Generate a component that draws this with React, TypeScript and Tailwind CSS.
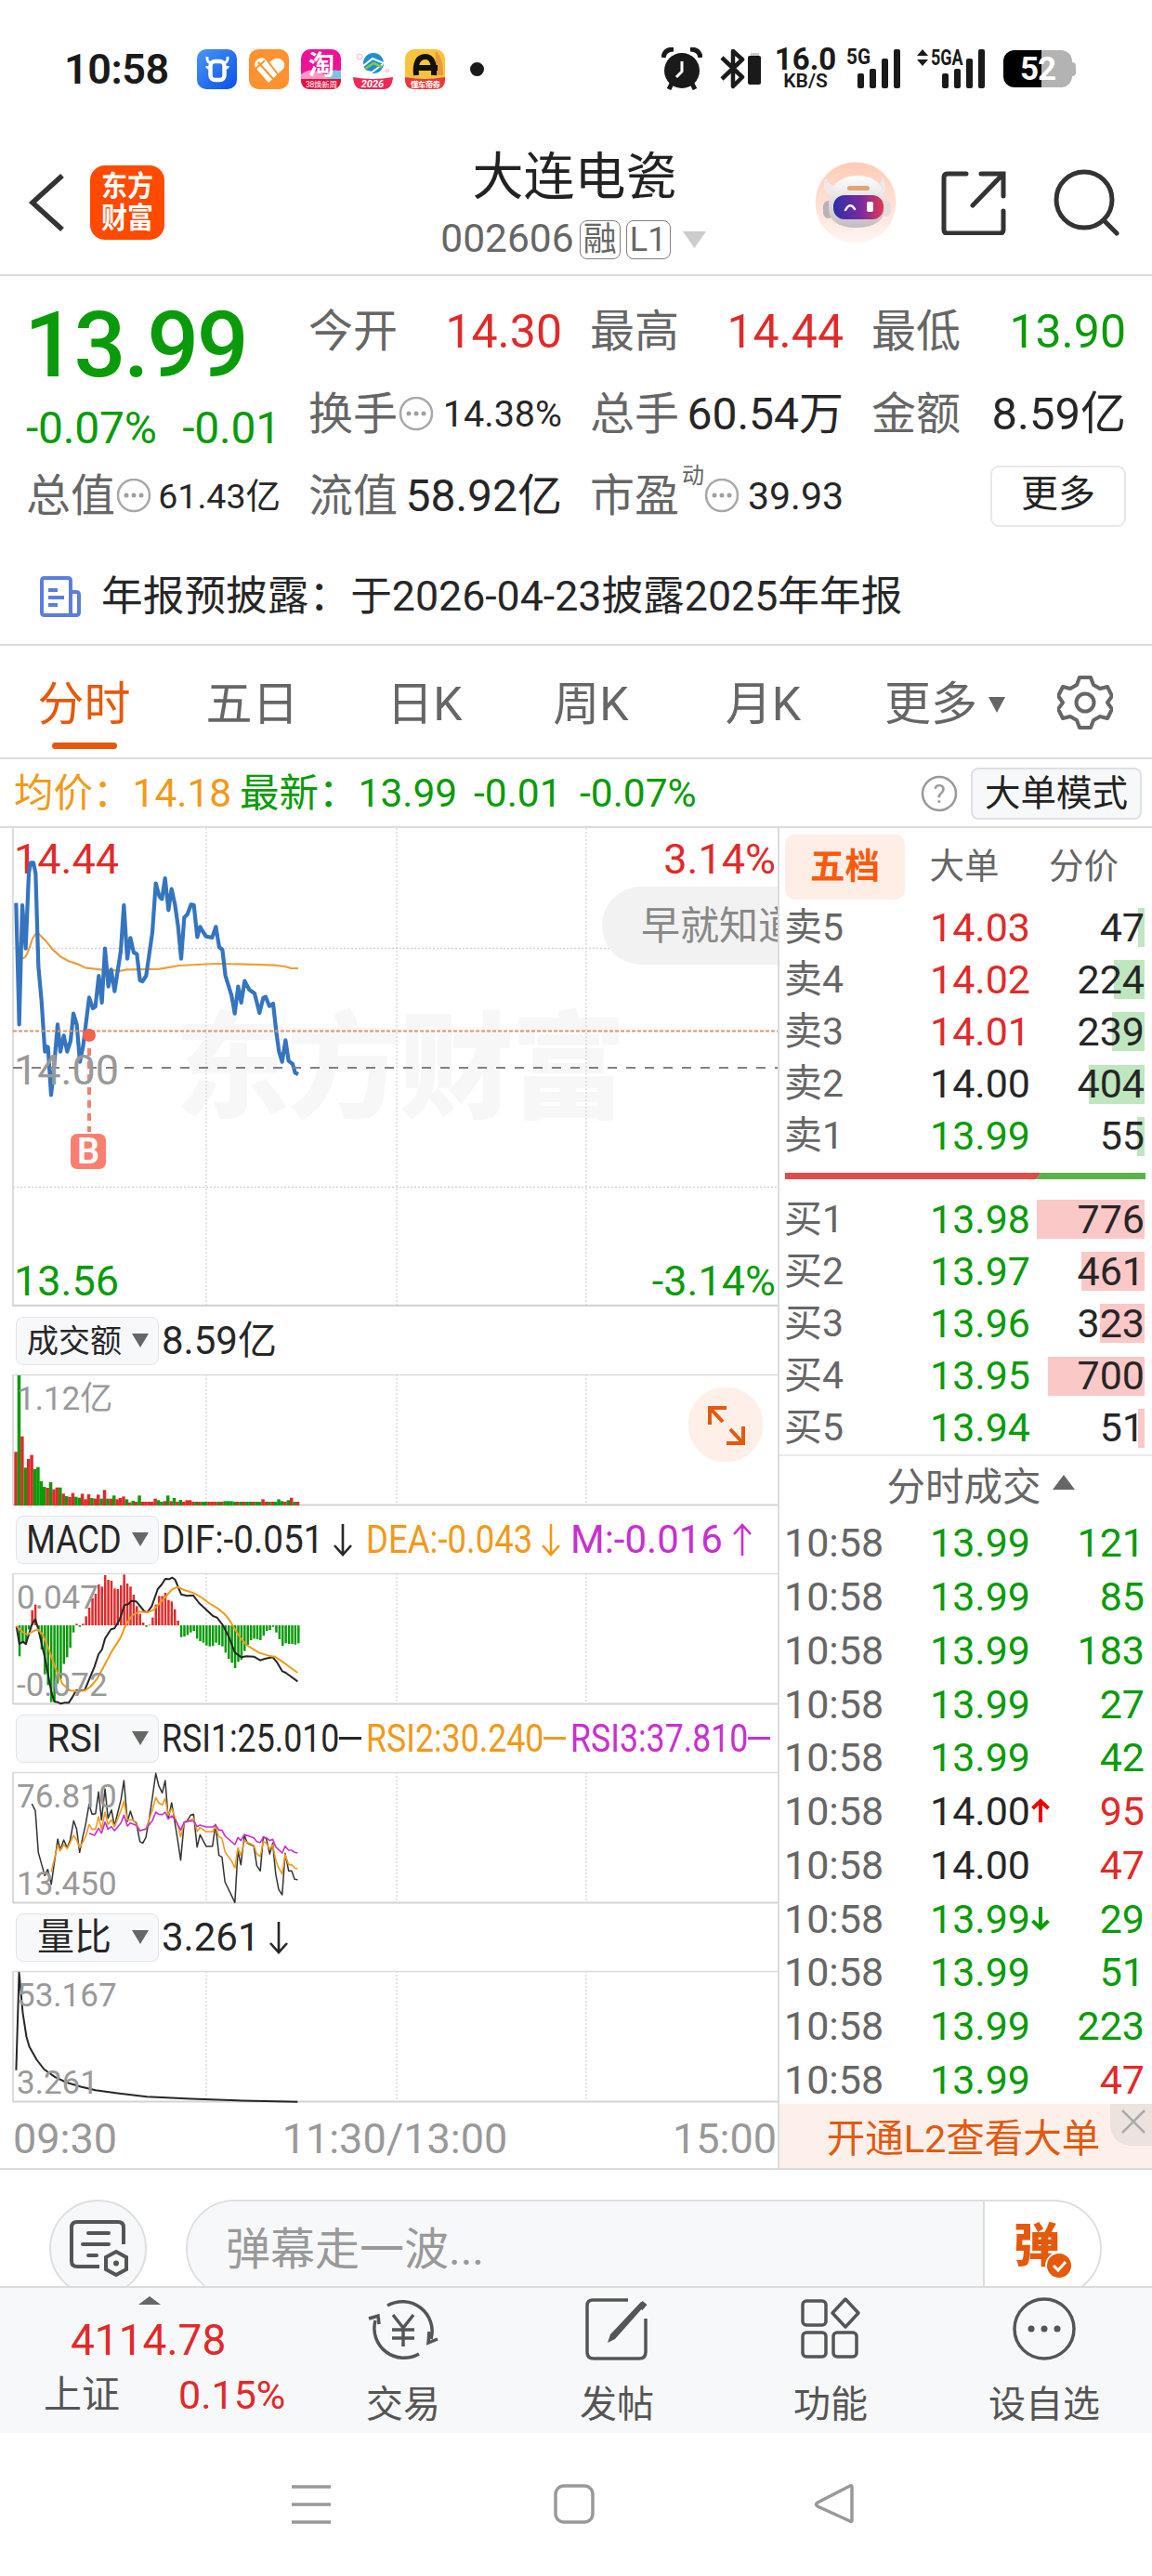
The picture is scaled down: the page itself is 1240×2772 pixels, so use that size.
import React from 'react';

const RED = '#e02a2a';
const GREEN = '#0a9b0a';
const ORANGE = '#f09a1a';
const PURPLE = '#c92fd0';

const tabs = [
  { label: '分时', width: 'w-[181px]' },
  { label: '五日', width: 'w-[181px]' },
  { label: '日K', width: 'w-[190px]' },
  { label: '周K', width: 'w-[168px]' },
  { label: '月K', width: 'w-[203px]' },
];

const asks = [
  { name: '卖5', price: '14.03', volume: '47', bar: 7, color: 'text-[#e02a2a]' },
  { name: '卖4', price: '14.02', volume: '224', bar: 33, color: 'text-[#e02a2a]' },
  { name: '卖3', price: '14.01', volume: '239', bar: 35, color: 'text-[#e02a2a]' },
  { name: '卖2', price: '14.00', volume: '404', bar: 60, color: 'text-[#262626]' },
  { name: '卖1', price: '13.99', volume: '55', bar: 8, color: 'text-[#0a9b0a]' },
];

const bids = [
  { name: '买1', price: '13.98', volume: '776', bar: 116, color: 'text-[#0a9b0a]' },
  { name: '买2', price: '13.97', volume: '461', bar: 68, color: 'text-[#0a9b0a]' },
  { name: '买3', price: '13.96', volume: '323', bar: 48, color: 'text-[#0a9b0a]' },
  { name: '买4', price: '13.95', volume: '700', bar: 104, color: 'text-[#0a9b0a]' },
  { name: '买5', price: '13.94', volume: '51', bar: 7, color: 'text-[#0a9b0a]' },
];

const trades: { price: string; volume: string; up?: boolean; arrow?: 'up' | 'down' }[] = [
  { price: '13.99', volume: '121' },
  { price: '13.99', volume: '85' },
  { price: '13.99', volume: '183' },
  { price: '13.99', volume: '27' },
  { price: '13.99', volume: '42' },
  { price: '14.00', volume: '95', up: true, arrow: 'up' },
  { price: '14.00', volume: '47', up: true },
  { price: '13.99', volume: '29', arrow: 'down' },
  { price: '13.99', volume: '51' },
  { price: '13.99', volume: '223' },
  { price: '13.99', volume: '47', up: true },
];

const priceLine =
  '52,275 62,667 72,282 83,422 93,180 99,145 108,145 115,180 124,480 134,590 145,755 147,737 155,740 165,895 175,800 186,667 195,755 206,703 217,755 228,720 237,632 248,668 258,788 268,740 288,580 300,615 308,610 319,510 329,597 339,422 350,545 359,490 370,560 390,430 400,282 411,455 421,388 432,435 442,440 452,525 460,528 472,510 492,370 503,212 515,255 523,262 533,195 544,298 554,230 565,280 575,350 585,455 595,322 605,312 617,280 626,282 637,385 646,352 665,383 685,387 697,352 708,418 718,425 728,510 748,575 758,632 769,545 779,597 790,527 805,555 822,567 838,630 850,582 858,578 870,608 882,600 892,690 901,755 911,788 922,718 932,785 945,795 953,823 963,828';
const averageLine =
  '68,456 80,451 87,440 95,420 105,390 115,375 125,375 150,400 170,425 195,448 220,462 250,472 275,484 325,490 390,494 410,490 515,488 580,477 640,474 700,471 790,473 885,476 920,480 940,486 963,486';

const volumeBars =
  'r173 g420 r223 g122 r150 r163 g117 g124 g78 g60 r57 g75 r52 r58 g58 r38 g30 r27 r40 g28 g25 r38 r20 r36 g24 r22 r35 g22 r50 g22 r22 g32 r20 r24 r29 g20 r10 g15 r12 g32 r12 r12 r12 r12 r22 g17 g12 r14 g32 r14 g24 r12 g18 r12 r17 r17 r12 g12 r12 g12 g12 r12 r12 r12 g12 r12 g14 g14 g14 g12 r12 g12 r12 g12 g12 r12 g12 g12 r20 r12 g12 r12 g12 g20 g14 r12 g17 r25 g12 r12'.split(' ');

// positive values hang below the zero line
const macdBars = [
  100, 58, 63, 13, -49, -67, 13, 78, 158, 193, 248, 245, 188, 173, 125, 103, 73, 23, -5, 5, -5, -29, -57, -87, -102, -132, -125,
  -162, -147, -144, -119, -117, -129, -164, -135, -125, -99, -62, -37, -9, 5, -2, -25, -67, -95, -95, -105, -82, -77, -52, -15, 38,
  36, 31, 23, 18, 43, 51, 56, 65, 68, 66, 56, 63, 68, 88, 108, 121, 138, 118, 111, 83, 63, 48, 43, 45, 48, 33, 18, 15, 5, 23, 45,
  66, 58, 60, 60, 62, 58,
];
const difLine =
  '33,390 39,447 46,440 52,447 64,385 71,367 77,400 90,490 103,600 109,633 116,635 122,640 130,637 138,637 145,620 153,597 170,597 190,520 198,480 205,465 211,430 223,400 230,397 240,370 250,322 258,318 264,308 274,310 290,342 296,345 305,325 317,270 325,255 332,237 340,238 346,233 352,240 364,287 376,292 388,290 400,315 428,357 436,362 448,387 460,425 472,475 485,490 495,487 510,488 523,500 532,495 548,490 556,505 567,535 574,540 598,568';
const deaLine =
  '33,390 45,408 55,417 64,408 75,400 85,415 95,450 110,520 125,575 140,597 155,600 170,598 182,585 195,560 210,515 225,470 243,425 250,395 258,372 268,352 280,343 296,345 308,338 318,320 330,300 345,272 357,263 370,273 390,283 405,297 420,315 440,335 452,352 462,372 472,400 482,425 495,450 508,463 520,475 540,485 552,488 568,505 585,525 598,540';

const rsi1Line =
  '64,963 71,985 77,1120 90,1195 96,1175 103,1223 116,1077 121,1113 128,1080 135,1105 141,1080 148,1018 154,1045 160,1120 166,1072 172,1030 179,965 185,997 192,995 198,925 204,1015 211,915 217,1010 224,983 230,1035 243,950 249,888 256,1020 262,987 268,1018 274,1025 281,1085 287,1090 293,1072 300,1010 306,945 313,865 319,905 326,928 332,888 338,1010 345,960 357,1080 363,1145 370,1025 376,1018 383,1000 389,997 396,1103 402,1063 414,1100 427,1100 433,1030 440,1130 446,1135 452,1215 472,1282 478,1115 484,1160 491,1065 497,1090 510,1100 516,1163 523,1180 529,1070 535,1075 542,1125 548,1090 554,1190 560,1240 567,1257 573,1123 580,1180 586,1180 592,1207 598,1208';
const rsi2Line =
  '103,1183 116,1097 121,1115 128,1095 135,1108 148,1065 154,1080 160,1105 172,1070 179,1030 185,1045 192,1045 198,1005 204,1045 211,990 217,1030 224,1015 230,1037 243,985 249,955 256,1015 268,1015 274,1030 281,1050 287,1048 293,1045 306,985 313,943 319,960 326,967 332,945 338,1000 345,978 357,1030 363,1070 370,1025 389,1010 396,1052 402,1040 414,1053 427,1053 433,1037 440,1070 446,1075 452,1118 466,1150 472,1170 478,1105 484,1130 491,1083 510,1097 516,1125 523,1133 529,1085 535,1090 542,1110 548,1095 554,1145 560,1170 567,1190 573,1127 580,1160 586,1160 592,1170 598,1173';
const rsi3Line =
  '179,1058 190,1065 198,1042 204,1058 211,1022 217,1045 224,1037 230,1050 243,1025 249,1000 256,1035 262,1025 274,1033 281,1050 287,1047 293,1045 306,1018 313,990 319,997 326,998 332,990 338,1012 345,1002 352,1015 363,1048 370,1022 389,1018 396,1037 402,1032 414,1038 427,1038 433,1032 440,1048 446,1048 452,1067 472,1095 478,1072 484,1082 491,1062 510,1073 516,1085 523,1088 529,1072 535,1073 542,1082 548,1078 554,1102 567,1122 573,1100 580,1113 586,1113 592,1120 598,1122';
const ratioLine =
  '22,402 26,177 31,270 36,325 40,348 50,378 60,400 75,418 90,430 110,440 130,448 160,455 200,463 260,468 330,472 405,475';

const Line: React.FC<{ points: string; color: string; width?: number }> = ({ points, color, width = 1.8 }) => (
  <polyline points={points} fill="none" stroke={color} strokeWidth={width} strokeLinejoin="round" vectorEffect="non-scaling-stroke" />
);

const Grid: React.FC<{ height: number }> = ({ height }) => (
  <g fill="none" stroke="#dcdcdc" strokeWidth="1.5">
    {[222, 427, 631].map((x) => (
      <path key={x} d={`M${x} 0V${height}`} strokeDasharray="2 2" />
    ))}
    <path d={`M14 0V${height}`} strokeWidth="2" />
  </g>
);

const MoreDots: React.FC = () => (
  <svg className="ml-px size-[38px] shrink-0" viewBox="0 0 38 38">
    <circle cx="19" cy="17" r="17" fill="none" stroke="#a8a8a8" strokeWidth="2.5" className="translate-y-px" />
    <g fill="#a0a0a0">
      <circle cx="11" cy="18" r="2.5" />
      <circle cx="19" cy="18" r="2.5" />
      <circle cx="27" cy="18" r="2.5" />
    </g>
  </svg>
);

const SignalBars: React.FC = () => (
  <svg className="h-[44px] w-[46px]" viewBox="0 0 46 44" fill="#1a1a1a">
    <rect x="0" y="27" width="7" height="16" rx="2" />
    <rect x="13" y="22" width="7" height="21" rx="2" />
    <rect x="26" y="11" width="7" height="32" rx="2" />
    <rect x="39" y="1" width="7" height="42" rx="2" />
  </svg>
);

const StatusBar: React.FC = () => (
  <div className="flex h-[140px] items-center pt-[8px] pl-[69px]">
    <span className="w-[143px] text-[45px] leading-none font-semibold tracking-[-0.5px] text-[#1a1a1a]">10:58</span>
    <div className="flex gap-[13px]">
      <svg className="size-[43px]" viewBox="0 0 43 43">
        <defs>
          <linearGradient id="blue" x1="0" y1="0" x2="1" y2="1">
            <stop stopColor="#4a96f8" />
            <stop offset="1" stopColor="#0a50e8" />
          </linearGradient>
        </defs>
        <rect width="43" height="43" rx="10" fill="url(#blue)" />
        <rect x="14.5" y="13" width="15" height="20" rx="5" fill="none" stroke="#fff" strokeWidth="4.5" />
        <path d="M11 8q-1 7 6 7M33 8q1 7-6 7" fill="none" stroke="#fff" strokeWidth="3" />
        <path d="M9 18h5v4q-4 0-5-4zM35 18h-5v4q4 0 5-4z" fill="#fff" />
      </svg>
      <svg className="size-[43px]" viewBox="0 0 43 43">
        <rect width="43" height="43" rx="10" fill="#ff922e" />
        <path d="M21 36 8 21q-4-5 0-9t9-2l5 4 4-3q6-3 10 1t1 9z" fill="#fff" />
        <path d="m5 23 12-11M10 14 26 32M18 10l14 18" fill="none" stroke="#ff922e" strokeWidth="2" />
      </svg>
      <svg className="size-[43px]" viewBox="0 0 43 43">
        <rect width="43" height="43" rx="10" fill="#ee1296" />
        <path d="M0 27q10-8 20-2t23-3v10H0z" fill="#f79ac4" />
        <path d="M28 26q8-6 15-2v8H28z" fill="#7cc4e8" />
        <path d="M0 32h43q0 11-10 11H10Q0 43 0 32z" fill="#e5103c" />
        <text x="22" y="27" textAnchor="middle" fill="#fff" fontSize="28" fontWeight="700">淘</text>
        <text x="22" y="41" textAnchor="middle" fill="#fff" fontSize="8.5" textLength="34">38焕新周</text>
      </svg>
      <svg className="size-[43px]" viewBox="0 0 43 43">
        <circle cx="22" cy="15" r="11" fill="#1c8fd0" />
        <path d="m11 18 10-8 12 5M12 23l8 2 12-9" fill="none" stroke="#fff" strokeWidth="2" />
        <path d="m13 21 9-6 9 4" fill="none" stroke="#8cc63f" strokeWidth="2.5" />
        <circle cx="7" cy="8" r="3" fill="none" stroke="#f9b4cc" />
        <circle cx="37" cy="23" r="1.5" fill="none" stroke="#f9b4cc" />
        <path d="M0 30q21 4 43 0-1 13-10 13H10Q1 43 0 30z" fill="#ec2a55" />
        <text x="21" y="41" textAnchor="middle" fill="#fff" fontSize="11" fontStyle="italic" fontWeight="700">2026</text>
      </svg>
      <svg className="size-[43px]" viewBox="0 0 43 43">
        <rect width="43" height="43" rx="10" fill="#fbc33c" />
        <path d="M33 2q8 6 8 26h-9z" fill="#e8993a" />
        <path d="M0 30q21 4 43 0v4q-1 9-10 9H10Q0 43 0 32z" fill="#e8393c" />
        <path d="M12 28q-2-20 10-20 10 0 9 20M10 20h25" fill="none" stroke="#111" strokeWidth="6" />
        <text x="22" y="41" textAnchor="middle" fill="#fff" fontSize="8.5" fontWeight="700" textLength="32">懂车帝券</text>
      </svg>
    </div>
    <span className="ml-[27px] size-[15px] rounded-full bg-[#1a1a1a]" />
    <div className="ml-[191px] flex items-center">
      <svg className="h-[46px] w-[44px]" viewBox="0 0 44 46">
        <circle cx="22" cy="25" r="19" fill="#1a1a1a" />
        <path d="M2 11Q3 2 13 2M42 11Q41 2 31 2" fill="none" stroke="#1a1a1a" strokeWidth="5" />
        <path d="m11 39-3 6M33 39l3 6" stroke="#1a1a1a" strokeWidth="5" />
        <path d="M22 15v11l-6 6" fill="none" stroke="#fff" strokeWidth="3" />
      </svg>
      <svg className="ml-[19px] h-[44px] w-[44px]" viewBox="0 0 44 44">
        <path d="m2 10 22 21-10 10V3l10 9L2 33" fill="none" stroke="#1a1a1a" strokeWidth="4.5" strokeLinejoin="round" />
        <path d="M33 5h9v10h-9z" fill="#ccc" />
        <rect x="30" y="8" width="14" height="31" rx="2" fill="#1a1a1a" />
      </svg>
      <div className="ml-[15px] flex w-[66px] flex-col items-center text-[#1a1a1a]">
        <span className="text-[33px] leading-[26px] font-bold">16.0</span>
        <span className="text-[21px] leading-[20px] font-semibold">KB/S</span>
      </div>
      <div className="relative ml-[23px]">
        <SignalBars />
        <span className="absolute top-0 -left-[12px] origin-left scale-x-90 text-[23px] leading-[20px] font-bold text-[#1a1a1a]">5G</span>
      </div>
      <div className="relative ml-[45px]">
        <SignalBars />
        <span className="absolute top-0 -left-[12px] origin-left scale-x-75 text-[24px] leading-[20px] font-bold text-[#1a1a1a]">5GA</span>
        <svg className="absolute top-0 -left-[27px] h-[20px] w-[12px]" viewBox="0 0 12 20">
          <path d="m6 1 6 7H0zM6 19l6-7H0z" fill="#1a1a1a" />
        </svg>
      </div>
      <div className="ml-[20px] flex h-[40px] w-[74px] items-center justify-center rounded-[12px] bg-linear-to-r from-black from-[55%] to-[#b3b3b3] to-[55%]">
        <span className="text-[35px] leading-none font-bold tracking-[-1px] text-white">52</span>
      </div>
      <span className="h-[15px] w-[4px] rounded-r bg-[#b3b3b3]" />
    </div>
  </div>
);

const Header: React.FC = () => (
  <header className="flex h-[157px] items-center border-b-2 border-[#dcdcdc] pr-[35px] pl-[29px]">
    <svg className="h-[64px] w-[42px]" viewBox="0 0 42 64">
      <path d="M38 3 6 32l32 29" fill="none" stroke="#333" strokeWidth="5.5" />
    </svg>
    <div className="ml-[26px] flex size-[80px] items-center justify-center rounded-[16px] bg-[#ff4a00]">
      <div className="flex scale-y-110 flex-col text-[28px] leading-[31px] font-bold text-white">
        <span>东方</span>
        <span>财富</span>
      </div>
    </div>
    <div className="flex flex-1 flex-col items-center pl-[183px]">
      <h1 className="h-[72px] text-[55px] leading-[68px] text-[#222]">大连电瓷</h1>
      <div className="mt-[8px] -ml-[3px] flex h-[44px] items-center text-[42.5px] leading-none text-[#666]">
        <span>002606</span>
        <span className="ml-[6px] flex h-[42px] w-[44px] items-center justify-center rounded-[8px] border-[1.5px] border-[#808080] text-[36px]">融</span>
        <span className="ml-[6px] flex h-[42px] w-[48px] items-center justify-center rounded-[8px] border-[1.5px] border-[#808080] text-[36px]">L1</span>
        <svg className="ml-[13px] h-[18px] w-[25px]" viewBox="0 0 25 18">
          <path d="M0 0h25L12.5 18z" fill="#ccc" />
        </svg>
      </div>
    </div>
    <svg className="size-[88px]" viewBox="0 0 88 88">
      <defs>
        <linearGradient id="halo" x1="0" y1="0" x2="0" y2="1">
          <stop stopColor="#ffcbb5" />
          <stop offset="1" stopColor="#fff5f1" />
        </linearGradient>
        <linearGradient id="visor">
          <stop stopColor="#2e2fa6" />
          <stop offset=".55" stopColor="#7a2aa0" />
          <stop offset="1" stopColor="#e03a50" />
        </linearGradient>
        <linearGradient id="helmet" x1="0" y1="0" x2="0" y2="1">
          <stop stopColor="#ffffff" />
          <stop offset="1" stopColor="#c4bcc0" />
        </linearGradient>
      </defs>
      <circle cx="44" cy="44" r="43.5" fill="url(#halo)" />
      <path d="M11 17q-4 15 5 18l8-9q-9 0-13-9zM73 16q6 13 0 19l-9-9q8-1 9-10z" fill="#eee8e8" />
      <rect x="9" y="42" width="12" height="19" rx="6" fill="#b9b2b6" />
      <rect x="70" y="42" width="12" height="17" rx="6" fill="#e5dcde" />
      <path d="M15 48q0-32 30-33t30 31q3 24-30 25-31 0-30-23z" fill="url(#helmet)" />
      <rect x="20" y="36" width="54" height="26" rx="12" fill="url(#visor)" />
      <rect x="35" y="26" width="24" height="5" rx="2.5" fill="#dda673" />
      <path d="M33 52q5-9 10-1" fill="none" stroke="#fff" strokeWidth="2.5" strokeLinecap="round" />
      <rect x="56" y="43" width="7" height="11" rx="2" fill="#fff" />
    </svg>
    <svg className="ml-[48px] size-[70px]" viewBox="0 0 70 70">
      <path d="M27 4H7Q3 4 3 8v56q0 4 4 4h56q4 0 4-4V44M43 4h24v24M66 5 34 38" fill="none" stroke="#333" strokeWidth="5" strokeLinecap="round" />
    </svg>
    <svg className="ml-[50px] size-[72px]" viewBox="0 0 72 72">
      <circle cx="34" cy="33" r="30" fill="none" stroke="#333" strokeWidth="5" />
      <path d="m55 55 14 14" stroke="#333" strokeWidth="5" strokeLinecap="round" />
    </svg>
  </header>
);

const Stat: React.FC<{ label: string; value: string; color?: string; dots?: boolean; sup?: string; size?: string }> = ({
  label,
  value,
  color = 'text-[#262626]',
  dots,
  sup,
  size = 'text-[48px]',
}) => (
  <div className="flex h-[88.5px] items-center justify-between leading-none whitespace-nowrap">
    <span className="flex items-center text-[48px] text-[#666]">
      {label}
      {sup && <span className="-mt-[44px] ml-[3px] -mr-px text-[24px]">{sup}</span>}
      {dots && <MoreDots />}
    </span>
    <span className={`${size} ${color}`}>{value}</span>
  </div>
);

const Quote: React.FC = () => (
  <section className="grid h-[281px] grid-cols-[274px_273px_273px_274px] content-start gap-x-[30px] pt-[16px] pl-[28px]">
    <div className="row-span-2 text-[#0a9b0a]">
      <div className="mt-[10px] -ml-[2px] text-[98.5px] leading-none font-medium tracking-[-2.4px]">13.99</div>
      <div className="mt-[15px] flex justify-between text-[48px] leading-none tracking-[-0.2px]">
        <span>-0.07%</span>
        <span>-0.01</span>
      </div>
    </div>
    <Stat label="今开" value="14.30" color="text-[#e02a2a]" size="text-[50px]" />
    <Stat label="最高" value="14.44" color="text-[#e02a2a]" size="text-[50px]" />
    <Stat label="最低" value="13.90" color="text-[#0a9b0a]" size="text-[50px]" />
    <Stat label="换手" value="14.38%" dots size="text-[39.5px]" />
    <Stat label="总手" value="60.54万" />
    <Stat label="金额" value="8.59亿" size="text-[49px]" />
    <Stat label="总值" value="61.43亿" dots size="text-[37.5px]" />
    <Stat label="流值" value="58.92亿" />
    <Stat label="市盈" value="39.93" sup="动" dots size="text-[41px]" />
    <div className="flex h-[88.5px] items-center justify-end">
      <button className="h-[66px] w-[146px] rounded-[9px] border-2 border-[#e8e8e8] pb-[4px] text-[40px] leading-none text-[#222]">更多</button>
    </div>
  </section>
);

const Notice: React.FC = () => (
  <div className="flex h-[117px] items-center border-b-2 border-[#dcdcdc] pt-[13px] pl-[43px] text-[44.7px] leading-none text-[#262626]">
    <svg className="mr-[22px] size-[44px]" viewBox="0 0 44 44" fill="none" stroke="#5b7de0" strokeWidth="4">
      <path d="M33 41V5q0-3-3-3H5Q2 2 2 5v34q0 3 3 3h34q3 0 3-3V20q0-3-3-3h-6" />
      <path d="M9 15h10M9 23h17M9 31h10" />
    </svg>
    年报预披露：于2026-04-23披露2025年年报
  </div>
);

const Tabs: React.FC = () => (
  <nav className="flex h-[122px] items-center border-b-2 border-[#dcdcdc] text-[50px] leading-none text-[#666]">
    {tabs.map((tab, i) => (
      <div key={tab.label} className={`relative flex h-full items-center justify-center pt-[6px] ${tab.width} ${i === 0 ? 'text-[#e5590c]' : ''}`}>
        {tab.label}
        {i === 0 && <span className="absolute bottom-[9px] h-[7px] w-[70px] rounded-full bg-[#e5590c]" />}
      </div>
    ))}
    <div className="flex w-[188px] items-center justify-center gap-[12px] pt-[6px]">
      更多
      <svg className="h-[17px] w-[18px]" viewBox="0 0 18 17">
        <path d="M0 0h18L9 17z" fill="#666" />
      </svg>
    </div>
    <svg className="mt-[2px] ml-[27px] size-[60px]" viewBox="0 0 60 60" fill="none" stroke="#666" strokeWidth="4">
      <path d="m24 3h12l3 8 7 4 8-2 5 10-5 7 5 7-5 10-8-2-7 4-3 8H24l-3-8-7-4-8 2-5-10 5-7-5-7 5-10 8 2 7-4z" strokeLinejoin="round" />
      <circle cx="30" cy="30" r="9.5" />
    </svg>
  </nav>
);

const InfoRow: React.FC = () => (
  <div className="flex h-[74px] items-center border-b-2 border-[#dcdcdc] pt-[2px] pr-[11px] pl-[15px] text-[42.5px] leading-none whitespace-nowrap text-[#0a9b0a]">
    <span className="w-[243px] text-[#f09a1a]">均价：14.18</span>
    <span className="w-[252px]">最新：13.99</span>
    <span className="w-[114px]">-0.01</span>
    <span>-0.07%</span>
    <svg className="ml-auto size-[40px]" viewBox="0 0 40 40">
      <circle cx="20" cy="20" r="18" fill="none" stroke="#999" strokeWidth="2.5" />
      <text x="20" y="30" textAnchor="middle" fontSize="28" fill="#999">?</text>
    </svg>
    <button className="ml-[14px] h-[56px] w-[184px] rounded-[8px] border-2 border-[#dde0e5] bg-[#f7f8fa] text-[38.5px] leading-none text-[#222]">大单模式</button>
  </div>
);

const PriceChart: React.FC = () => (
  <svg className="block h-[515px] w-[837px]" viewBox="0 0 837 515" fontSize="45">
    <text x="188" y="302" fontSize="124" fontWeight="900" fill="#f7f7f7" textLength="486">东方财富</text>
    <Grid height={515} />
    <path d="M14 129.5H837M14 386.5H837" stroke="#d4d4d4" strokeWidth="1.5" strokeDasharray="2 2" />
    <path d="M14 514H837" stroke="#d4d4d4" strokeWidth="2.5" />
    <path d="M648 105a42 42 0 0 1 42-42H837v84H690a42 42 0 0 1-42-42z" fill="#f2f2f2" />
    <text x="690" y="120" fontSize="42" fill="#888">早就知道</text>
    <text x="15" y="49" fill={RED}>14.44</text>
    <text x="835" y="49" textAnchor="end" fill={RED}>3.14%</text>
    <g transform="translate(0 -11) scale(.33333)">
      <Line points={averageLine} color="#e8a03c" width={2.2} />
      <Line points={priceLine} color="#3575bf" width={4.2} />
    </g>
    <path d="M14 218.5H837" stroke="#d9986c" strokeWidth="2" strokeDasharray="4 2" />
    <path d="M14 258H837" stroke="#808080" strokeWidth="2" strokeDasharray="10 10" />
    <circle cx="96" cy="223" r="7" fill="#f4624e" />
    <path d="M96 237V327" stroke="#f08070" strokeWidth="4" strokeDasharray="8 6" />
    <rect x="76" y="329" width="38" height="38" rx="7" fill="#fb7f70" />
    <text x="95" y="361" textAnchor="middle" fontSize="38" fontWeight="600" fill="#fff">B</text>
    <text x="15" y="276" fill="#999">14.00</text>
    <text x="15" y="503" fill={GREEN}>13.56</text>
    <text x="835" y="503" textAnchor="end" fill={GREEN}>-3.14%</text>
  </svg>
);

const PanelHeader: React.FC<{ name: React.ReactNode; children: React.ReactNode }> = ({ name, children }) => (
  <div className="flex h-[73px] items-center pl-[17px] text-[42px] leading-none whitespace-nowrap text-[#262626]">
    <div className="mr-[3px] flex h-[52px] w-[154px] shrink-0 items-center rounded-[8px] border border-[#e2e4e8] bg-[#f7f8fa]">
      <span className="flex w-[124px] justify-center">{name}</span>
      <svg className="h-[15px] w-[18px]" viewBox="0 0 18 15">
        <path d="M0 0h18L9 15z" fill="#666" />
      </svg>
    </div>
    {children}
  </div>
);

const Arrow: React.FC<{ up?: boolean; color?: string }> = ({ up, color = '#262626' }) => (
  <svg className={`h-[36px] w-[22px] ${up ? 'rotate-180' : ''}`} viewBox="0 0 22 36">
    <path d="M11 1v32M2 24l9 10 9-10" fill="none" stroke={color} strokeWidth="2.6" />
  </svg>
);

const IndicatorChart: React.FC<{ high: string; low?: string; children: React.ReactNode }> = ({ high, low, children }) => (
  <svg className="block h-[141px] w-[837px] overflow-visible" viewBox="0 0 837 141" fontSize="35">
    <Grid height={141} />
    <path d="M14 .5H837" stroke="#dcdcdc" strokeWidth="1.5" />
    <path d="M14 140.5H837" stroke="#d4d4d4" strokeWidth="2" />
    {children}
    <text x="18" y="38" fill="#999">{high}</text>
    {low && <text x="18" y="132" fill="#999">{low}</text>}
  </svg>
);

const Charts: React.FC = () => (
  <div className="w-[837px]">
    <PriceChart />

    <PanelHeader name={<span className="text-[34px]">成交额</span>}>8.59亿</PanelHeader>
    <IndicatorChart high="1.12亿">
      {volumeBars.map((bar, i) => {
        const height = Number(bar.slice(1)) / 3;
        return <rect key={i} x={15.3 + i * 3.41} y={141 - height} width="3.5" height={height} fill={bar[0] === 'r' ? RED : GREEN} />;
      })}
      <circle cx="781" cy="54" r="40.5" fill="#fef0e8" />
      <path d="M764 54V36h18M765 37l13 14M800 56v18h-18M799 73l-13-14" fill="none" stroke="#e5590c" strokeWidth="4" />
    </IndicatorChart>

    <PanelHeader name={<span className="scale-x-[.86]">MACD</span>}>
      <div className="flex w-[220px] items-center">
        <span className="w-[184px] origin-left scale-x-[.92]">DIF:-0.051</span>
        <Arrow />
      </div>
      <div className="flex w-[220px] items-center text-[#f09a1a]">
        <span className="w-[188px] origin-left scale-x-[.87]">DEA:-0.043</span>
        <Arrow color={ORANGE} />
      </div>
      <div className="flex items-center text-[#c92fd0]">
        <span className="w-[174px]">M:-0.016</span>
        <Arrow up color={PURPLE} />
      </div>
    </PanelHeader>
    <IndicatorChart high="0.047" low="-0.072">
      {macdBars.map((v, i) => (
        <rect key={i} x={19.8 + i * 3.412} y={v > 0 ? 56 : 56 + v / 3} width="2.5" height={Math.abs(v) / 3} fill={v > 0 ? GREEN : RED} />
      ))}
      <g transform="translate(0 -73) scale(.5357 .33333)">
        <Line points={difLine} color="#262626" width={2} />
        <Line points={deaLine} color={ORANGE} width={2} />
      </g>
    </IndicatorChart>

    <PanelHeader name={<span className="scale-x-95">RSI</span>}>
      <div className="flex w-[220px] items-center">
        <span className="w-[191px] origin-left scale-x-[.85]">RSI1:25.010</span>
        <span className="h-[3px] w-[24px] bg-[#262626]" />
      </div>
      <div className="flex w-[220px] items-center text-[#f09a1a]">
        <span className="w-[191px] origin-left scale-x-[.85]">RSI2:30.240</span>
        <span className="h-[3px] w-[24px] bg-[#f09a1a]" />
      </div>
      <div className="flex items-center text-[#c92fd0]">
        <span className="w-[191px] origin-left scale-x-[.85]">RSI3:37.810</span>
        <span className="h-[3px] w-[24px] bg-[#c92fd0]" />
      </div>
    </PanelHeader>
    <IndicatorChart high="76.810" low="13.450">
      <g transform="translate(0 -287) scale(.5357 .33333)">
        <Line points={rsi1Line} color="#333" width={1.5} />
        <Line points={rsi2Line} color={ORANGE} width={1.6} />
        <Line points={rsi3Line} color={PURPLE} width={1.6} />
      </g>
    </IndicatorChart>

    <PanelHeader name={<span className="text-[40px]">量比</span>}>
      <span className="mr-[9px]">3.261</span>
      <Arrow />
    </PanelHeader>
    <IndicatorChart high="53.167" low="3.261">
      <g transform="translate(0 -81) scale(.7908 .4669)">
        <Line points={ratioLine} color="#262626" width={2} />
      </g>
    </IndicatorChart>

    <div className="flex h-[71px] items-center justify-between pt-[7px] pr-px pl-[14px] text-[45px] leading-none text-[#999]">
      <span>09:30</span>
      <span>11:30/13:00</span>
      <span>15:00</span>
    </div>
  </div>
);

const Level: React.FC<{ row: (typeof asks)[number]; buy?: boolean }> = ({ row, buy }) => (
  <div className="flex h-[56.2px] items-center text-[43px] leading-none text-[#262626]">
    <span className="w-[157px] text-[41px] text-[#666]">{row.name}</span>
    <span className={row.color}>{row.price}</span>
    <div className="relative ml-auto flex h-[42px] items-center">
      <span className={`absolute inset-y-0 right-0 ${buy ? 'bg-[#fbc8c8]' : 'bg-[#c0e6c0]'}`} style={{ width: row.bar }} />
      <span className="relative">{row.volume}</span>
    </div>
  </div>
);

const OrderBook: React.FC = () => (
  <aside className="flex flex-1 flex-col border-l-2 border-[#dcdcdc]">
    <div className="flex pt-[7px] pr-[8px] pl-[6px] text-[37.5px] leading-none text-[#666]">
      <span className="flex h-[70px] w-[129px] items-center justify-center rounded-[10px] bg-[#feeee6] font-bold text-[#fa5a0a]">五档</span>
      <span className="flex h-[70px] w-[128px] items-center justify-center">大单</span>
      <span className="flex h-[70px] w-[129px] items-center justify-center">分价</span>
    </div>
    <div className="pt-[2px] pr-[8px] pl-[5px]">
      {asks.map((row) => (
        <Level key={row.name} row={row} />
      ))}
    </div>
    <svg className="mt-[11px] ml-[6px] h-[7px] w-[388px] shrink-0" viewBox="0 0 388 7">
      <path d="M0 0h276l-6 7H0z" fill="#e04c4c" />
      <path d="M276 0h112v7H270z" fill="#58b348" />
    </svg>
    <div className="pt-[15px] pr-[8px] pl-[5px]">
      {bids.map((row) => (
        <Level key={row.name} row={row} buy />
      ))}
    </div>
    <div className="flex h-[67px] items-center justify-center gap-[12px] border-t-2 border-[#eaeaea] pt-[2px] pl-[32px] text-[41.5px] leading-none text-[#666]">
      分时成交
      <svg className="mb-[10px] h-[16px] w-[24px]" viewBox="0 0 24 16">
        <path d="M12 0 24 16H0z" fill="#666" />
      </svg>
    </div>
    <div className="h-[632px] pr-[8px] pl-[5px]">
      {trades.map((t, i) => (
        <div key={i} className="flex h-[57.75px] items-center text-[43px] leading-none">
          <span className="w-[157px] text-[#666]">10:58</span>
          <span className={t.price === '14.00' ? 'text-[#262626]' : 'text-[#0a9b0a]'}>{t.price}</span>
          {t.arrow && (
            <svg className={`mb-[2px] ml-px h-[27px] w-[20px] ${t.arrow === 'down' ? 'rotate-180' : ''}`} viewBox="0 0 20 27">
              <path d="M10 26V3M1.5 11 10 3l8.5 8" fill="none" stroke={t.arrow === 'up' ? '#e00' : GREEN} strokeWidth="4" />
            </svg>
          )}
          <span className={`ml-auto ${t.up ? 'text-[#e02a2a]' : 'text-[#0a9b0a]'}`}>{t.volume}</span>
        </div>
      ))}
    </div>
    <div className="relative flex min-h-0 flex-1 items-center justify-center bg-[#fdf0ea] pt-[7px] pr-[5px] text-[41.5px] leading-none text-[#e05a10]">
      开通L2查看大单
      <span className="absolute top-0 right-0 flex h-[45px] w-[45px] items-center justify-center rounded-bl-[22px] bg-[#ece2de] pb-[6px] pl-[4px]">
        <svg className="size-[26px]" viewBox="0 0 26 26">
          <path d="m1 1 24 24M25 1 1 25" stroke="#aaa" strokeWidth="2.5" />
        </svg>
      </span>
    </div>
  </aside>
);

const CommentBar: React.FC = () => (
  <div className="flex h-[125px] overflow-hidden pt-[32px] pl-[53px]">
    <div className="flex size-[105px] shrink-0 items-center justify-center rounded-full border-2 border-[#dcdfe3] bg-[#f7f8fa]">
      <svg className="size-[66px]" viewBox="0 0 66 66" fill="none" stroke="#555" strokeWidth="4">
        <path d="M60 28V10q0-6-6-6H10q-6 0-6 6v36q0 6 6 6h24" />
        <path d="M22 16h22M16 28h28M22 40h9" strokeLinecap="round" />
        <path d="m52 36 11 6v13l-11 6-11-6V42z" />
        <circle cx="52" cy="48.5" r="3" fill="#555" stroke="none" />
      </svg>
    </div>
    <div className="ml-[42px] flex h-[105px] w-[986px] overflow-hidden rounded-full border-2 border-[#dcdfe3]">
      <div className="flex flex-1 items-center bg-[#f7f8fa] pt-[3px] pl-[41px] text-[48px] leading-none text-[#999]">弹幕走一波...</div>
      <div className="flex w-[126px] items-center border-l-2 border-[#dcdfe3] pl-[31px]">
        <svg className="h-[64px] w-[66px]" viewBox="0 0 66 64">
          <text x="0" y="46" fontSize="50" fontWeight="900" fill="#e5590c">弹</text>
          <circle cx="49" cy="50" r="14" fill="#e5590c" stroke="#fff" strokeWidth="2" />
          <path d="m43 50 5 5 8-9" fill="none" stroke="#fff" strokeWidth="3" />
        </svg>
      </div>
    </div>
  </div>
);

const NavItem: React.FC<{ label: string; children: React.ReactNode }> = ({ label, children }) => (
  <div className="flex w-[230px] flex-col items-center pt-[9px] text-[40px] leading-none text-[#555]">
    <svg className="size-[72px] overflow-visible" viewBox="0 0 72 72" fill="none" stroke="#555" strokeWidth="3.5">
      {children}
    </svg>
    <span className="mt-[25px]">{label}</span>
  </div>
);

const BottomNav: React.FC = () => (
  <footer className="flex h-[158px] border-t-2 border-[#dcdcdc] bg-[#f7f8fa]">
    <div className="flex w-[319px] shrink-0 flex-col pt-[9px] leading-none text-[#e02a2a]">
      <svg className="ml-[149px] h-[9px] w-[24px]" viewBox="0 0 24 9">
        <path d="M12 0 24 9H0z" fill="#666" />
      </svg>
      <span className="mt-[15px] ml-[76px] text-[46px]">4114.78</span>
      <div className="mt-[15px] flex items-center pl-[47px] text-[43px]">
        <span className="w-[145px] text-[41px] text-[#555]">上证</span>
        0.15%
      </div>
    </div>
    <NavItem label="交易">
      <path d="M19 10A32 32 0 0 1 66 46M53 62A32 32 0 0 1 6 26" />
      <path d="m-1 24 10-3 1 9M73 46l-10 4 1-12" />
      <path d="m25 20 11 14 11-14M36 34v20M24 36h24M24 45h24" />
    </NavItem>
    <NavItem label="发帖">
      <path d="M48 4H10Q4 4 4 10v50q0 7 7 7h49q7 0 7-7V24" />
      <path d="M62 6 29 41l-3 9 8-4 32-36z" fill="#555" stroke="none" />
      <path d="m61 8 5 4" strokeWidth="8" />
    </NavItem>
    <NavItem label="功能">
      <rect x="6" y="5" width="25" height="26" rx="4" />
      <rect x="6" y="39" width="25" height="26" rx="4" />
      <rect x="39" y="39" width="25" height="26" rx="4" />
      <path d="m52 3 14 15-14 15-14-15z" strokeLinejoin="round" />
    </NavItem>
    <NavItem label="设自选">
      <circle cx="36" cy="35" r="32" />
      <g fill="#555" stroke="none">
        <circle cx="22" cy="35" r="3.5" />
        <circle cx="36" cy="35" r="3.5" />
        <circle cx="50" cy="35" r="3.5" />
      </g>
    </NavItem>
  </footer>
);

const SystemNav: React.FC = () => (
  <div className="flex h-[154px] pt-[53px] pl-[314px]">
    <svg className="h-[46px] w-[42px]" viewBox="0 0 42 46">
      <path d="M0 5h42M0 24h42M0 43h42" stroke="#999" strokeWidth="3.5" />
    </svg>
    <svg className="ml-[240px] h-[46px] w-[44px]" viewBox="0 0 44 46">
      <rect x="2" y="4" width="40" height="39" rx="9" fill="none" stroke="#999" strokeWidth="3.5" />
    </svg>
    <svg className="ml-[236px] h-[46px] w-[44px]" viewBox="0 0 44 46">
      <path d="M41 6v35q0 2-2 1L4 26q-3-2 0-4L39 4q2-1 2 2z" fill="none" stroke="#999" strokeWidth="3.5" />
    </svg>
  </div>
);

const App: React.FC = () => {
  return (
    <div className="h-[2772px] w-[1240px] overflow-hidden bg-white font-[Roboto,'Noto_Sans_CJK_SC',sans-serif]">
      <StatusBar />
      <Header />
      <Quote />
      <Notice />
      <Tabs />
      <InfoRow />
      <main className="flex h-[1444px] border-b-2 border-[#dcdcdc]">
        <Charts />
        <OrderBook />
      </main>
      <CommentBar />
      <BottomNav />
      <SystemNav />
    </div>
  );
};

export default App;
